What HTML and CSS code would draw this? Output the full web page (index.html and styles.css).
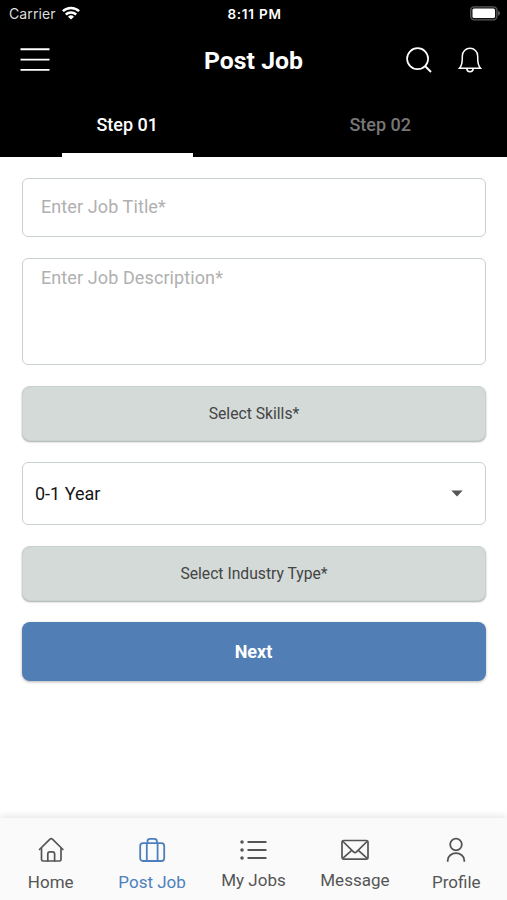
FILE: index.html
```html
<!DOCTYPE html>
<html lang="en">
<head>
<meta charset="utf-8">
<title>Post Job</title>
<link rel="stylesheet" href="styles.css">
</head>
<body>
<div class="app">
  <header class="header">
    <div class="status">
      <div class="status-left">
        <span class="carrier">Carrier</span>
        <svg class="wifi" width="18" height="14" viewBox="0 0 18 14" fill="none" stroke="#fff" stroke-width="2.5">
          <path d="M.9 5.2a11.6 11.6 0 0 1 16.2 0"/>
          <path d="M3.8 8.5a7.5 7.5 0 0 1 10.4 0"/>
          <path d="M9 13.6 6 10.7a4.3 4.3 0 0 1 6 0z" fill="#fff" stroke="none"/>
        </svg>
      </div>
      <span class="time">8:11 PM</span>
      <div class="status-right">
        <svg width="30" height="15" viewBox="0 0 30 15">
          <rect x=".7" y=".8" width="26.2" height="13" rx="3.5" fill="#111" stroke="#59595b" stroke-width="1.3"/>
          <rect x="2.5" y="2.6" width="22.5" height="9.4" rx="1.6" fill="#fff"/>
          <path d="M28 4.8q2 .8 2 2.5t-2 2.5z" fill="#59595b"/>
        </svg>
      </div>
    </div>
    <div class="toolbar">
      <button class="icon-btn" aria-label="Menu">
        <svg width="30" height="26" viewBox="0 0 30 26" stroke="#fff" stroke-width="1.9"><path d="M.5 2.3h29M.5 12.6h29M.5 22.9h29"/></svg>
      </button>
      <h1 class="title">Post Job</h1>
      <div class="actions">
        <button class="icon-btn" aria-label="Search">
          <svg width="26" height="26" viewBox="0 0 26 26" fill="none" stroke="#fff" stroke-width="1.7"><circle cx="11.6" cy="11.7" r="10.5"/><path d="m19 19 6 6" stroke-width="2"/></svg>
        </button>
        <button class="icon-btn" aria-label="Notifications">
          <svg width="24" height="26" viewBox="0 0 24 26" fill="none" stroke="#fff" stroke-width="1.5"><path d="M1.5 21.2C4 18.6 4.3 15.5 4.3 11V9a7.7 7.7 0 0 1 15.4 0v2c0 4.5.3 7.6 2.8 10.2z"/><path d="M8.8 21.5a3.2 3.2 0 0 0 6.4 0"/></svg>
        </button>
      </div>
    </div>
    <nav class="tabs">
      <a class="tab tab-active">Step 01</a>
      <a class="tab">Step 02</a>
    </nav>
  </header>
  <main class="form">
    <input class="field title-field" placeholder="Enter Job Title*">
    <textarea class="field desc-field" placeholder="Enter Job Description*"></textarea>
    <button class="picker">Select Skills*</button>
    <div class="field select"><span>0-1 Year</span><svg width="12" height="7" viewBox="0 0 12 7"><path d="M.3.4h11.4L6 6.500z" fill="#555"/></svg></div>
    <button class="picker">Select Industry Type*</button>
    <button class="next">Next</button>
  </main>
  <footer class="bottom-nav">
    <a class="nav-item">
      <svg width="28" height="26" viewBox="0 0 28 26" fill="none" stroke="currentColor" stroke-width="1.7" stroke-linejoin="round" stroke-linecap="round"><path d="M2.5 12.5 13 2.200q1.200-1 2.400 0L25.900 12.500"/><path d="M4.500 11.500v11q0 1.500 1.500 1.500h16.500q1.500 0 1.500-1.500v-11"/><path d="M10.800 24v-7q0-2.200 2.200-2.200h2.400q2.200 0 2.200 2.200v7"/></svg>
      <span>Home</span>
    </a>
    <a class="nav-item nav-active">
      <svg width="28" height="26" viewBox="0 0 28 26" fill="none" stroke="currentColor" stroke-width="1.8"><rect x="2.200" y="6.200" width="24" height="17.800" rx="2.800"/><path d="M8.800 24V6.200M19.600 24V6.200M9.500 6V4.300q0-2.500 2.500-2.500h4.400q2.500 0 2.500 2.500V6"/></svg>
      <span>Post Job</span>
    </a>
    <a class="nav-item nav-raised">
      <svg width="28" height="26" viewBox="0 0 28 26" fill="none" stroke="currentColor" stroke-width="2" stroke-linecap="round"><path d="M9.300 5h17.400M9.300 13h17.400M9.300 21h17.400"/><path d="M3 5h.01M3 13h.01M3 21h.01" stroke-width="3.500"/></svg>
      <span>My Jobs</span>
    </a>
    <a class="nav-item nav-raised">
      <svg width="28" height="26" viewBox="0 0 28 26" fill="none" stroke="currentColor" stroke-width="1.700" stroke-linejoin="round"><rect x="1" y="3.500" width="26" height="18.600" rx="1.800"/><path d="m2 4.500 10.500 10.300q1.500 1.400 3 0L26 4.500M2 21.200l8.700-7.800M26 21.200l-8.700-7.800"/></svg>
      <span>Message</span>
    </a>
    <a class="nav-item">
      <svg width="28" height="26" viewBox="0 0 28 26" fill="none" stroke="currentColor" stroke-width="1.800"><circle cx="14" cy="7.500" r="5.800"/><path d="M5.700 24.700v-1.200a8.300 7.400 0 0 1 16.600 0v1.200"/></svg>
      <span>Profile</span>
    </a>
  </footer>
</div>
</body>
</html>
```
FILE: styles.css
```css
* { box-sizing: border-box; }

body {
  margin: 0;
  background: #fff;
  font-family: Roboto, sans-serif;
}

button {
  font: inherit;
  border: 0;
  cursor: pointer;
}

svg { display: block; flex: none; }

.app {
  height: 900px;
  display: flex;
  flex-direction: column;
}

.header {
  height: 157px;
  background: #000;
  color: #fff;
}

.status {
  height: 28px;
  padding: 0 7px 0 9px;
  display: grid;
  grid-template-columns: 1fr auto 1fr;
  align-items: center;
  font: 14px/28px Inter, sans-serif;
}

.status-left { display: flex; align-items: center; gap: 6px; }
.carrier { color: #ddd; letter-spacing: 0.1px; }
.wifi { margin-top: -2px; }
.time { font-size: 13.5px; font-weight: 600; letter-spacing: 0.75px; }
.status-right { display: flex; justify-content: flex-end; margin-top: -1px; }

.toolbar {
  height: 64px;
  padding: 0 25px 0 20px;
  display: grid;
  grid-template-columns: 1fr auto 1fr;
  align-items: center;
}

.icon-btn { padding: 0; background: none; justify-self: start; }
.title { margin: 1px 0 0 5px; font-size: 24.800px; line-height: 32px; font-weight: 700; }
.actions { display: flex; justify-content: flex-end; gap: 26px; }

.tabs { height: 65px; display: grid; grid-template-columns: 1fr 1fr; justify-items: center; }

.tab {
  width: 131px;
  text-align: center;
  font-size: 18px;
  font-weight: 500;
  line-height: 65px;
  color: #777;
}

.tab-active { color: #fff; border-bottom: 4px solid #fff; height: 65px; margin-left: 1px; }

.form {
  flex: 1;
  padding: 21px 21px 0 22px;
  display: flex;
  flex-direction: column;
  gap: 21px;
}

.field {
  width: 100%;
  border: 1px solid #c8d1d0;
  border-radius: 6px;
  background: #fff;
  font-family: inherit;
  font-size: 18px;
  outline: 0;
  resize: none;
}

.field::placeholder { color: #b0b0b0; opacity: 1; letter-spacing: 0.1px; }
.title-field { height: 59px; padding: 0 18px 3px; }
.desc-field { height: 107px; padding: 8px 18px; line-height: 22px; }

.picker {
  height: 55px;
  border: 1px solid #c8d2cf;
  border-radius: 8px;
  background: #d3dad8;
  color: #444;
  font-size: 15.700px;
  box-shadow: 0 1px 2px rgba(0, 0, 0, 0.35);
}

.select {
  height: 63px;
  padding: 0 22px 0 12px;
  display: flex;
  align-items: center;
  justify-content: space-between;
  color: #161616;
}

.next {
  height: 59px;
  padding: 0 7px 0 6px;
  border-radius: 8px;
  background: #507eb5;
  color: #fff;
  font-size: 18px;
  font-weight: 700;
  box-shadow: 0 1px 3px rgba(0, 0, 0, 0.3);
}

.bottom-nav {
  height: 82px;
  padding-top: 19px;
  display: grid;
  grid-template-columns: repeat(5, 1fr);
  background: #fafafa;
  box-shadow: 0 -2px 7px rgba(0, 0, 0, 0.1);
}

.nav-item {
  display: flex;
  flex-direction: column;
  align-items: center;
  gap: 8px;
  color: #555;
  font-size: 17px;
  line-height: 22px;
}

.nav-raised { gap: 6px; }
.nav-active { color: #4d7fbd; }
```
